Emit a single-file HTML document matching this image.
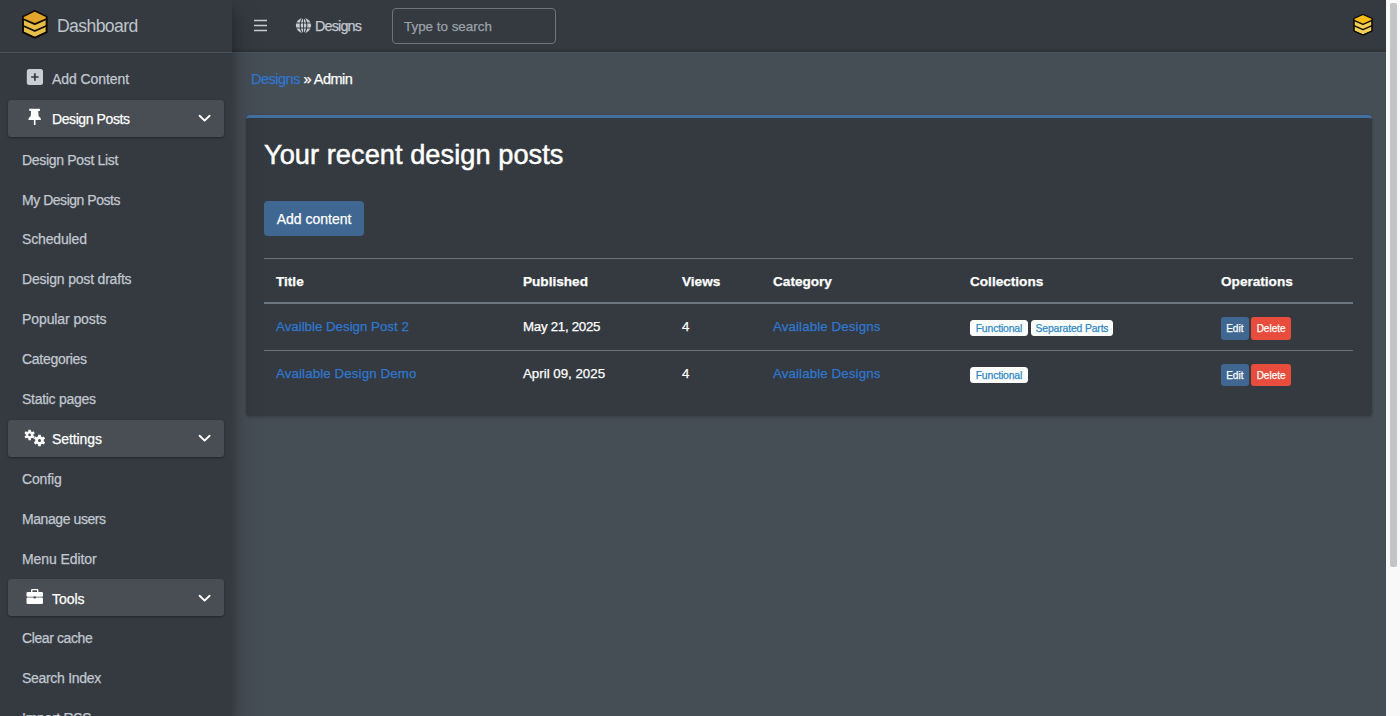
<!DOCTYPE html>
<html><head><meta charset="utf-8">
<style>
*{box-sizing:border-box;margin:0;padding:0}
html,body{width:1400px;height:716px;overflow:hidden;background:#454d55;font-family:"Liberation Sans",sans-serif;}
div{-webkit-text-stroke:0.25px currentColor}
.abs{position:absolute;white-space:nowrap}
#sidebar{position:absolute;left:0;top:0;width:232px;height:716px;background:#343a40;box-shadow:0 14px 28px rgba(0,0,0,.25),0 10px 10px rgba(0,0,0,.22);z-index:5}
#brand{position:absolute;left:0;top:0;width:232px;height:53px;border-bottom:1px solid #4b545c}
#header{position:absolute;left:232px;top:0;width:1154px;height:53px;box-shadow:inset 0 -3px 2px -1px rgba(0,0,0,.12);background:#343a40;border-bottom:1px solid #4b545c;z-index:3}
#content{position:absolute;left:232px;top:52px;width:1154px;height:664px;background:#454d55}
#scroll{position:absolute;left:1386px;top:0;width:14px;height:716px;background:#f9f9fa;z-index:9}
#thumb{position:absolute;left:4px;top:3px;width:7px;height:563.5px;background:#c3c4c5;border-radius:2px}
.nav{position:absolute;left:22px;color:#c2c7d0;font-size:14px;line-height:20px;letter-spacing:-0.3px;white-space:nowrap}
.open{position:absolute;left:8px;width:216px;height:37px;background:rgba(255,255,255,.1);border-radius:3px;box-shadow:0 1px 3px rgba(0,0,0,.12),0 1px 2px rgba(0,0,0,.24)}
.card{position:absolute;left:246px;top:115px;width:1126px;height:301px;background:#343a40;border-top:3px solid #4470a0;border-radius:4px;box-shadow:0 0 1px rgba(0,0,0,.125),0 1px 3px rgba(0,0,0,.2)}
.th{position:absolute;color:#fff;font-weight:bold;font-size:13.6px;letter-spacing:0}
.td{position:absolute;color:#fff;font-size:13.3px}
.lnk{color:#3077cf}
.hr{position:absolute;left:264px;width:1089px;height:1px;background:#6c757d}
.badge{position:absolute;height:16.5px;background:#fff;color:#2e87c5;border-radius:3.5px;font-size:10.4px;letter-spacing:-0.15px;line-height:17.5px;text-align:center;font-weight:normal}
.btn{position:absolute;height:22.4px;color:#fff;font-size:10px;line-height:23.8px;text-align:center;border-radius:3px}
</style></head><body>
<div id="content">
<div class="abs" style="left:19px;top:17px;font-size:14.5px;line-height:20px;letter-spacing:-0.5px;color:#fff"><span class="lnk">Designs</span> &raquo; Admin</div>
</div>
<div class="card"></div>
<div class="abs" style="left:264px;top:135px;font-size:27.2px;line-height:40px;letter-spacing:0.05px;color:#fff;-webkit-text-stroke:0.5px #fff">Your recent design posts</div>
<div class="abs" style="left:264px;top:201px;width:100px;height:35px;background:#3f6791;border-radius:4px;color:#fff;font-size:14px;line-height:37px;text-align:center">Add content</div>
<div class="hr" style="top:258px"></div>
<div class="hr" style="top:302px;height:2px"></div>
<div class="hr" style="top:350px"></div>
<div class="th" style="left:276px;top:272px;line-height:20px">Title</div>
<div class="th" style="left:523px;top:272px;line-height:20px">Published</div>
<div class="th" style="left:682px;top:272px;line-height:20px">Views</div>
<div class="th" style="left:773px;top:272px;line-height:20px">Category</div>
<div class="th" style="left:970px;top:272px;line-height:20px">Collections</div>
<div class="th" style="left:1221px;top:272px;line-height:20px">Operations</div>
<div class="td lnk" style="left:276px;top:317px;line-height:20px">Availble Design Post 2</div>
<div class="td" style="left:523px;top:317px;line-height:20px;letter-spacing:-0.28px">May 21, 2025</div>
<div class="td" style="left:682px;top:317px;line-height:20px">4</div>
<div class="td lnk" style="left:773px;top:317px;line-height:20px;letter-spacing:0.12px">Available Designs</div>
<div class="badge" style="left:970px;top:319.6px;width:57.8px">Functional</div>
<div class="badge" style="left:1031px;top:319.6px;width:82px">Separated Parts</div>
<div class="btn" style="left:1221px;top:317.2px;width:27.6px;background:#3f6791">Edit</div>
<div class="btn" style="left:1251.4px;top:317.2px;width:39.4px;background:#e74c3c">Delete</div>
<div class="td lnk" style="left:276px;top:364px;line-height:20px;letter-spacing:0.12px">Available Design Demo</div>
<div class="td" style="left:523px;top:364px;line-height:20px">April 09, 2025</div>
<div class="td" style="left:682px;top:364px;line-height:20px">4</div>
<div class="td lnk" style="left:773px;top:364px;line-height:20px;letter-spacing:0.12px">Available Designs</div>
<div class="badge" style="left:970px;top:366.8px;width:57.8px">Functional</div>
<div class="btn" style="left:1221px;top:364px;width:27.6px;background:#3f6791">Edit</div>
<div class="btn" style="left:1251.4px;top:364px;width:39.4px;background:#e74c3c">Delete</div>

<div id="header">
<svg class="abs" style="left:0;top:0" width="1154" height="52" viewBox="232 0 1154 52">
 <path d="M254 20.5 H267 M254 25.5 H267 M254 30.5 H267" stroke="#c9cdd3" stroke-width="1.6"/>
 <circle cx="303.5" cy="25.5" r="7.6" fill="#c9cdd3"/>
 <g fill="none" stroke="#343a40" stroke-width="1.1">
  <ellipse cx="303.5" cy="25.5" rx="3.3" ry="7.6"/>
  <path d="M295.5 23 H311.5 M295.5 28 H311.5"/>
  <path d="M303.5 18 V33" stroke-width="0.9"/>
 </g>
 <g stroke="#120d05" stroke-width="1.1" stroke-linejoin="round">
  <path d="M1354 18.6 L1363 14.4 L1372 18.6 L1372 30.9 L1363 35.1 L1354 30.9 Z" fill="#f2cf55"/>
  <path d="M1354 18.6 L1363 14.4 L1372 18.6 L1372 20.4 L1363 24.4 L1354 20.4 Z" fill="#f7be17" stroke="none"/>
  <path d="M1354 20.4 L1363 24.4 L1372 20.4" fill="none" stroke-width="1.5"/>
  <path d="M1354 25.7 L1363 29.7 L1372 25.7" fill="none" stroke-width="1.4"/>
  <path d="M1354 18.6 L1363 14.4 L1372 18.6 L1372 30.9 L1363 35.1 L1354 30.9 Z" fill="none"/>
 </g>
</svg>
<div class="abs" style="left:83px;top:16px;font-size:14.4px;line-height:20px;letter-spacing:-0.85px;color:#c2c7d0">Designs</div>
<div class="abs" style="left:160px;top:8px;width:164px;height:35.5px;border:1px solid #6c757d;border-radius:4px;background:#343a40"></div>
<div class="abs" style="left:172px;top:16.5px;font-size:13.4px;line-height:20px;color:#9ba1a8">Type to search</div>
</div>
<div id="sidebar"><div id="brand"></div>

<div class="abs" style="left:57px;top:13px;font-size:17.6px;line-height:26px;letter-spacing:-0.6px;color:#bfc4cb;-webkit-text-stroke:0;">Dashboard</div>
<div class="nav" style="top:69px;left:52px;letter-spacing:-0.07px">Add Content</div>
<div class="open" style="top:100px"></div>
<div class="nav" style="top:109px;left:52px;color:#fff;letter-spacing:-0.41px">Design Posts</div>
<div class="nav" style="top:149.60px;letter-spacing:-0.32px">Design Post List</div>
<div class="nav" style="top:189.50px;letter-spacing:-0.47px">My Design Posts</div>
<div class="nav" style="top:229.40px;letter-spacing:-0.15px">Scheduled</div>
<div class="nav" style="top:269.30px;letter-spacing:-0.19px">Design post drafts</div>
<div class="nav" style="top:309.20px;letter-spacing:-0.09px">Popular posts</div>
<div class="nav" style="top:349.10px;letter-spacing:-0.29px">Categories</div>
<div class="nav" style="top:389.00px;letter-spacing:-0.28px">Static pages</div>
<div class="open" style="top:419.60px"></div>
<div class="nav" style="top:428.90px;left:52px;color:#fff;letter-spacing:-0.09px">Settings</div>
<div class="nav" style="top:468.80px;letter-spacing:-0.15px">Config</div>
<div class="nav" style="top:508.70px;letter-spacing:-0.42px">Manage users</div>
<div class="nav" style="top:548.60px;letter-spacing:-0.09px">Menu Editor</div>
<div class="open" style="top:579.20px"></div>
<div class="nav" style="top:588.50px;left:52px;color:#fff;letter-spacing:-0.02px">Tools</div>
<div class="nav" style="top:628.40px;letter-spacing:-0.40px">Clear cache</div>
<div class="nav" style="top:668.30px;letter-spacing:-0.30px">Search Index</div>
<div class="nav" style="top:708.20px;">Import RSS</div>
<svg class="abs" style="left:0;top:0" width="232" height="716" viewBox="0 0 232 716">
 <!-- brand logo -->
 <g stroke="#120d05" stroke-width="1.6" stroke-linejoin="round">
  <path d="M23 16.6 L34.8 10.9 L46.6 16.6 L46.6 32.2 L34.8 37.8 L23 32.2 Z" fill="#e7bf48"/>
  <path d="M23 16.6 L34.8 10.9 L46.6 16.6 L46.6 19 L34.8 24.1 L23 19 Z" fill="#e3a52a" stroke="none"/>
  <path d="M23 19 L34.8 24.1 L46.6 19" fill="none" stroke-width="1.9"/>
  <path d="M23 25.8 L34.8 31 L46.6 25.8" fill="none" stroke-width="1.8"/>
  <path d="M23 16.6 L34.8 10.9 L46.6 16.6 L46.6 32.2 L34.8 37.8 L23 32.2 Z" fill="none"/>
 </g>
 <!-- plus square -->
 <rect x="26.8" y="69" width="16.2" height="16" rx="2.5" fill="#c9cdd4"/>
 <path d="M34.9 73.3 V80.7 M31.2 77 H38.6" stroke="#343a40" stroke-width="1.7"/>
 <!-- thumbtack -->
 <path d="M29.3 108.8 H39.9 V111 H38.2 L38.6 116.3 Q41 117.6 41 120 H28.3 Q28.3 117.6 30.7 116.3 L31.1 111 H29.3 Z" fill="#fff"/>
 <rect x="33.9" y="120" width="1.6" height="5" fill="#fff"/>
 <!-- chevrons -->
 <path d="M199.6 115.7 L204.6 120.6 L209.6 115.7" stroke="#fff" stroke-width="1.9" fill="none" stroke-linecap="round" stroke-linejoin="round"/>
 <path d="M199.6 435.7 L204.6 440.6 L209.6 435.7" stroke="#fff" stroke-width="1.9" fill="none" stroke-linecap="round" stroke-linejoin="round"/>
 <path d="M199.6 595.7 L204.6 600.6 L209.6 595.7" stroke="#fff" stroke-width="1.9" fill="none" stroke-linecap="round" stroke-linejoin="round"/>
 <!-- gears -->
 <path d="M28.36 431.20 L28.42 429.63 L30.78 429.63 L30.84 431.20 L32.18 431.97 L33.57 431.24 L34.75 433.29 L33.42 434.13 L33.42 435.67 L34.75 436.51 L33.57 438.56 L32.18 437.83 L30.84 438.60 L30.78 440.17 L28.42 440.17 L28.36 438.60 L27.02 437.83 L25.63 438.56 L24.45 436.51 L25.78 435.67 L25.78 434.13 L24.45 433.29 L25.63 431.24 L27.02 431.97 Z" fill="#fff"/>
 <path d="M38.13 436.32 L38.21 434.64 L40.79 434.64 L40.87 436.32 L42.34 437.17 L43.84 436.41 L45.13 438.64 L43.72 439.55 L43.72 441.25 L45.13 442.16 L43.84 444.39 L42.34 443.63 L40.87 444.48 L40.79 446.16 L38.21 446.16 L38.13 444.48 L36.66 443.63 L35.16 444.39 L33.87 442.16 L35.28 441.25 L35.28 439.55 L33.87 438.64 L35.16 436.41 L36.66 437.17 Z" fill="#fff"/>
 <circle cx="29.6" cy="434.9" r="1.4" fill="#474e56"/>
 <circle cx="39.5" cy="440.4" r="1.5" fill="#474e56"/>
 <!-- toolbox -->
 <path d="M31 592 V590 Q31 588.9 32 588.9 H37.4 Q38.4 588.9 38.4 590 V592 H37 V590.3 H32.4 V592 Z" fill="#fff"/>
 <rect x="26.5" y="592" width="16.5" height="4.7" rx="1.2" fill="#fff"/>
 <rect x="26.5" y="597.6" width="16.5" height="6.4" rx="1.2" fill="#fff"/>
 <rect x="33.6" y="596.4" width="2.3" height="2" fill="#474e56"/>
</svg>
</div>
<div id="scroll"><div id="thumb"></div></div>
</body></html>
